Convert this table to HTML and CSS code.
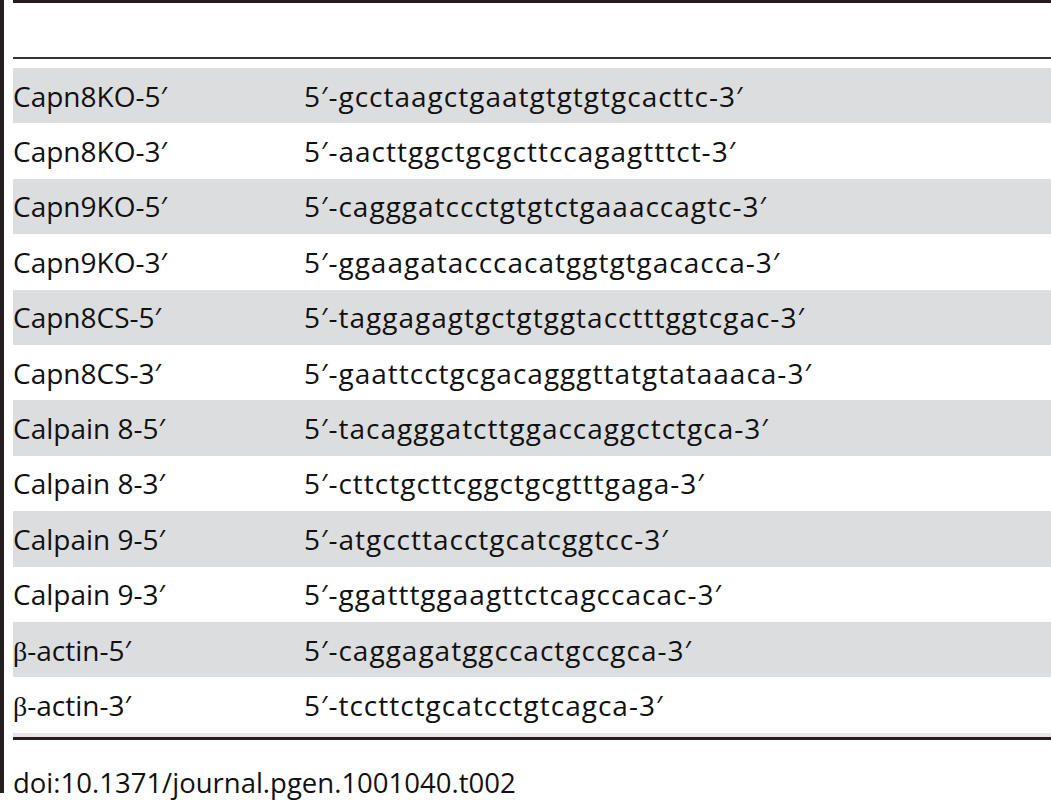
FILE: index.html
```html
<!DOCTYPE html>
<html>
<head>
<meta charset="utf-8">
<link rel="stylesheet" href="styles.css">
</head>
<body>
<div class="frame">
  <div class="primers">
    <div class="head"></div>
    <div class="rows">
      <div class="row shade"><span class="name">Capn8KO-5′</span><span class="seq">5′-gcctaagctgaatgtgtgtgcacttc-3′</span></div>
      <div class="row"><span class="name">Capn8KO-3′</span><span class="seq">5′-aacttggctgcgcttccagagtttct-3′</span></div>
      <div class="row shade"><span class="name">Capn9KO-5′</span><span class="seq">5′-cagggatccctgtgtctgaaaccagtc-3′</span></div>
      <div class="row"><span class="name">Capn9KO-3′</span><span class="seq">5′-ggaagatacccacatggtgtgacacca-3′</span></div>
      <div class="row shade"><span class="name">Capn8CS-5′</span><span class="seq">5′-taggagagtgctgtggtacctttggtcgac-3′</span></div>
      <div class="row"><span class="name">Capn8CS-3′</span><span class="seq">5′-gaattcctgcgacagggttatgtataaaca-3′</span></div>
      <div class="row shade"><span class="name">Calpain 8-5′</span><span class="seq">5′-tacagggatcttggaccaggctctgca-3′</span></div>
      <div class="row"><span class="name">Calpain 8-3′</span><span class="seq">5′-cttctgcttcggctgcgtttgaga-3′</span></div>
      <div class="row shade"><span class="name">Calpain 9-5′</span><span class="seq">5′-atgccttacctgcatcggtcc-3′</span></div>
      <div class="row"><span class="name">Calpain 9-3′</span><span class="seq">5′-ggatttggaagttctcagccacac-3′</span></div>
      <div class="row shade"><span class="name"><span class="greek">β</span>-actin-5′</span><span class="seq">5′-caggagatggccactgccgca-3′</span></div>
      <div class="row"><span class="name"><span class="greek">β</span>-actin-3′</span><span class="seq">5′-tccttctgcatcctgtcagca-3′</span></div>
    </div>
    <div class="bottom-rule"></div>
  </div>
  <p class="doi">doi:10.1371/journal.pgen.1001040.t002</p>
</div>
</body>
</html>
```

FILE: styles.css
```css
html, body {
  margin: 0;
  padding: 0;
  background: #ffffff;
}

body {
  font-family: "Open Sans", "Liberation Sans", sans-serif;
  color: #111111;
  width: 1051px;
  height: 800px;
  overflow: hidden;
}

.frame {
  border-left: 4px solid #231f20;
  padding-left: 9px;
  height: 793px;
  box-sizing: border-box;
}

.primers {
  border-top: 3px solid #231f20;
  font-size: 28px;
}

.head {
  height: 54px;
  border-bottom: 2px solid #333333;
}

.rows {
  padding-top: 9px;
  display: flex;
  flex-direction: column;
}

.row {
  height: 55.4px;
  display: flex;
  align-items: center;
  white-space: nowrap;
}

.shade {
  background: #dcddde;
}

.name {
  width: 291px;
  flex: none;
}

.seq {
  letter-spacing: 1px;
}

.greek {
  font-family: "Liberation Serif", serif;
}

.bottom-rule {
  height: 3px;
  border-top: 4px solid #e6e6e6;
  background: #231f20;
}

.doi {
  margin: 24px 0 0 0;
  font-size: 27.5px;
}
```
